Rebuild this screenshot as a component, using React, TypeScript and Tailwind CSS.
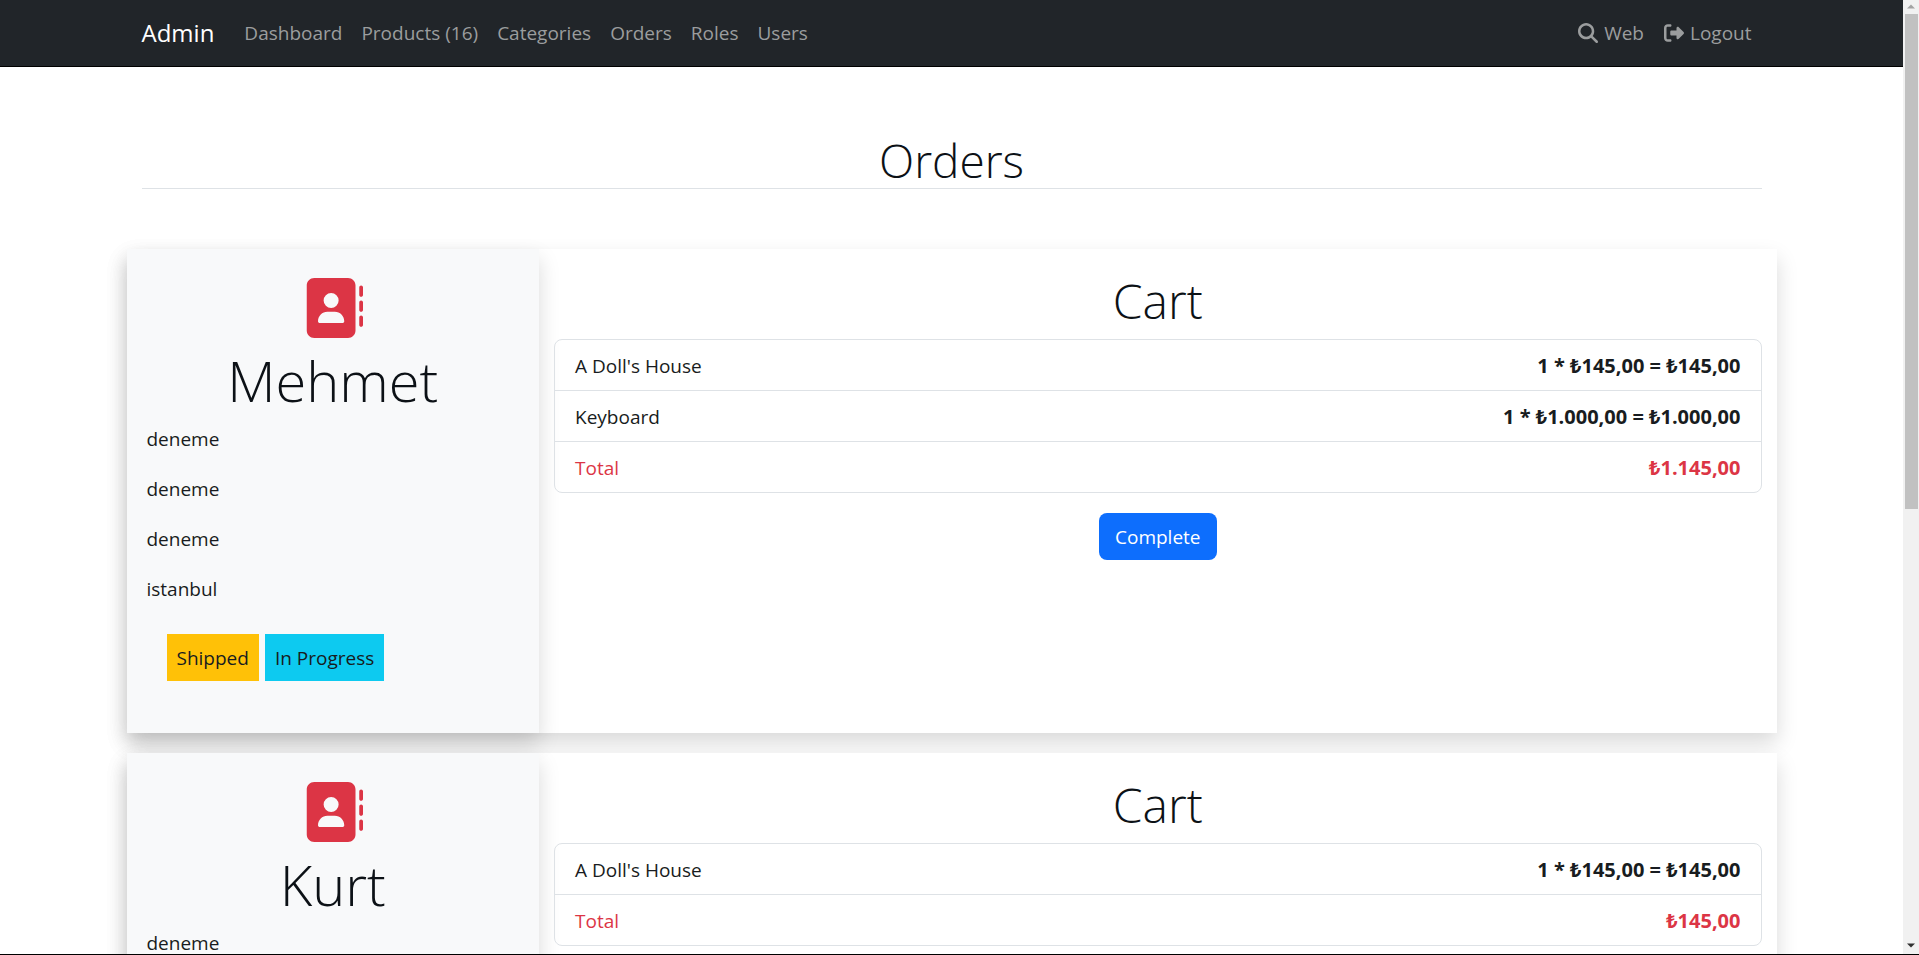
import { FaAddressBook, FaMagnifyingGlass, FaRightFromBracket } from "react-icons/fa6";

type Line = { name: string; quantity: number; price: string; sum: string };
type Order = { customer: string; address: string[]; lines: Line[]; total: string };

const links = ["Dashboard", "Products (16)", "Categories", "Orders", "Roles", "Users"];

const orders: Order[] = [
  {
    customer: "Mehmet",
    address: ["deneme", "deneme", "deneme", "istanbul"],
    lines: [
      { name: "A Doll's House", quantity: 1, price: "₺145,00", sum: "₺145,00" },
      { name: "Keyboard", quantity: 1, price: "₺1.000,00", sum: "₺1.000,00" },
    ],
    total: "₺1.145,00",
  },
  {
    customer: "Kurt",
    address: ["deneme", "deneme", "deneme", "istanbul"],
    lines: [{ name: "A Doll's House", quantity: 1, price: "₺145,00", sum: "₺145,00" }],
    total: "₺145,00",
  },
];

function Navbar() {
  return (
    <header className="border-b border-black bg-[#212529]">
      <nav className="mx-auto flex h-[66px] max-w-[1650px] items-center px-[15px] text-[#9b9d9e]">
        <a href="#" className="mr-5 text-2xl text-white">Admin</a>
        <ul className="flex grow">
          {links.map((label) => (
            <li key={label}>
              <a href="#" className="block pr-[9px] pl-[10px]">{label}</a>
            </li>
          ))}
        </ul>
        <ul className="flex">
          <li>
            <a href="#" className="flex items-center gap-[6px] px-[10px]">
              <FaMagnifyingGlass className="size-5" />
              Web
            </a>
          </li>
          <li>
            <a href="#" className="flex items-center gap-[6px] px-[10px]">
              <FaRightFromBracket className="size-5" />
              Logout
            </a>
          </li>
        </ul>
      </nav>
    </header>
  );
}

function OrderCard({ order }: { order: Order }) {
  return (
    <article className="mb-5 flex bg-white shadow-[0_10px_20px_rgba(0,0,0,0.15)]">
      <section className="w-1/4 bg-[#f8f9fa] px-5 pt-[23px] pb-[52px] shadow-[0_10px_20px_rgba(0,0,0,0.15)]">
        <div className="flex h-[72px] items-center justify-center">
          <FaAddressBook className="size-[60px] text-[#dc3545]" />
        </div>
        <h2 className="mb-2 text-center text-[56px] leading-[72px] font-light text-[#0c1116]">{order.customer}</h2>
        {order.address.map((line, i) => (
          <p key={i} className="mb-5">{line}</p>
        ))}
        <div className="mt-[30px] flex gap-[6px] px-5">
          <span className="bg-[#ffc107] px-[10px] pt-[9px] pb-2">Shipped</span>
          <span className="bg-[#0dcaf0] px-[10px] pt-[9px] pb-2">In Progress</span>
        </div>
      </section>
      <section className="flex grow flex-col items-center px-[15px] pt-[22px]">
        <h2 className="mb-2 text-5xl leading-[60px] font-light text-[#0c1116]">Cart</h2>
        <ul className="w-full divide-y divide-[#dee2e6] rounded-lg border border-[#dee2e6]">
          {order.lines.map((line) => (
            <li key={line.name} className="flex justify-between px-5 pt-[11px] pb-[9px]">
              {line.name}
              <strong className="text-xl leading-[30px] font-bold">
                {line.quantity} * {line.price} = {line.sum}
              </strong>
            </li>
          ))}
          <li className="flex justify-between px-5 pt-[11px] pb-[9px] text-[#dc3545]">
            Total
            <strong className="text-xl leading-[30px] font-bold">{order.total}</strong>
          </li>
        </ul>
        <button type="button" className="mt-5 rounded-lg bg-[#0d6efd] px-4 pt-[9px] pb-2 text-white">
          Complete
        </button>
      </section>
    </article>
  );
}

function Scrollbar() {
  return (
    <div aria-hidden="true" className="flex w-4 shrink-0 flex-col items-center justify-between bg-[#f1f1f1]">
      <div className="flex h-[509px] w-full flex-col items-center">
        <svg viewBox="0 0 16 14" className="h-[14px] w-4 shrink-0">
          <path d="M4 8.5 8 4.5 12 8.5Z" fill="#a3a3a3" />
        </svg>
        <div className="w-[13px] grow bg-[#c1c1c1]" />
      </div>
      <svg viewBox="0 0 16 14" className="h-[14px] w-4 shrink-0">
        <path d="M4 3.5 8 7.5 12 3.5Z" fill="#303030" />
      </svg>
    </div>
  );
}

export default function App() {
  return (
    <div className="flex h-screen border-b border-black bg-white font-['Open_Sans','Noto_Sans',sans-serif] text-[19px] leading-[30px] text-[#181c20]">
      <div className="grow overflow-y-auto [scrollbar-width:none]">
        <Navbar />
        <main className="mx-auto max-w-[1650px] pt-[65px]">
          <h1 className="mx-[15px] mb-[60px] border-b border-[#dee2e6] text-center text-[46px] leading-[56px] font-light text-[#0c1116]">
            Orders
          </h1>
          {orders.map((order) => (
            <OrderCard key={order.customer} order={order} />
          ))}
        </main>
      </div>
      <Scrollbar />
    </div>
  );
}
